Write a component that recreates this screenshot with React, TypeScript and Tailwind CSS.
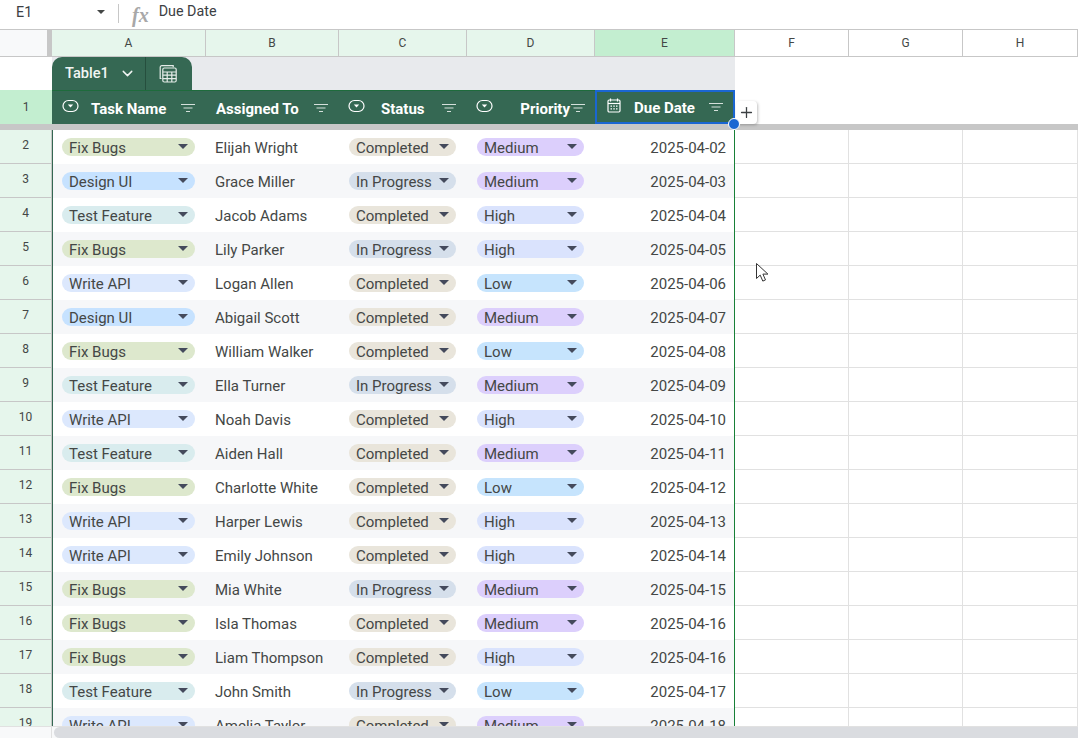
import { ChevronDown, Plus } from 'lucide-react'

const cols = 'grid grid-cols-[52px_154px_133px_128px_128px_140px_114px_114px_115px]'

const taskColors: Record<string, string> = {
  'Fix Bugs': 'bg-[#dde8cd]',
  'Design UI': 'bg-[#c6e2ff]',
  'Test Feature': 'bg-[#d9ecee]',
  'Write API': 'bg-[#dce8fd]',
}
const statusColors: Record<string, string> = {
  Completed: 'bg-[#e9e5db]',
  'In Progress': 'bg-[#d5dfeb]',
}
const priorityColors: Record<string, string> = {
  Medium: 'bg-[#dccffc]',
  High: 'bg-[#dae3fd]',
  Low: 'bg-[#c6e4fd]',
}

const rows = [
  ['Fix Bugs', 'Elijah Wright', 'Completed', 'Medium', '2025-04-02'],
  ['Design UI', 'Grace Miller', 'In Progress', 'Medium', '2025-04-03'],
  ['Test Feature', 'Jacob Adams', 'Completed', 'High', '2025-04-04'],
  ['Fix Bugs', 'Lily Parker', 'In Progress', 'High', '2025-04-05'],
  ['Write API', 'Logan Allen', 'Completed', 'Low', '2025-04-06'],
  ['Design UI', 'Abigail Scott', 'Completed', 'Medium', '2025-04-07'],
  ['Fix Bugs', 'William Walker', 'Completed', 'Low', '2025-04-08'],
  ['Test Feature', 'Ella Turner', 'In Progress', 'Medium', '2025-04-09'],
  ['Write API', 'Noah Davis', 'Completed', 'High', '2025-04-10'],
  ['Test Feature', 'Aiden Hall', 'Completed', 'Medium', '2025-04-11'],
  ['Fix Bugs', 'Charlotte White', 'Completed', 'Low', '2025-04-12'],
  ['Write API', 'Harper Lewis', 'Completed', 'High', '2025-04-13'],
  ['Write API', 'Emily Johnson', 'Completed', 'High', '2025-04-14'],
  ['Fix Bugs', 'Mia White', 'In Progress', 'Medium', '2025-04-15'],
  ['Fix Bugs', 'Isla Thomas', 'Completed', 'Medium', '2025-04-16'],
  ['Fix Bugs', 'Liam Thompson', 'Completed', 'High', '2025-04-16'],
  ['Test Feature', 'John Smith', 'In Progress', 'Low', '2025-04-17'],
  ['Write API', 'Amelia Taylor', 'Completed', 'Medium', '2025-04-18'],
]

function Chip({ label, color, width }: { label: string; color: string; width: string }) {
  return (
    <div className={`flex h-[18px] items-center justify-between rounded-full pl-[7px] pr-[7px] ${color} ${width}`}>
      <span className="pt-[2px]">{label}</span>
      <span className="mb-[2px] h-0 w-0 border-x-[5.5px] border-t-[5.5px] border-x-transparent border-t-[#444a5c]" />
    </div>
  )
}

function FilterIcon() {
  return (
    <svg width="14" height="10" viewBox="0 0 14 10" className="shrink-0">
      <path d="M0 1.5h14M2.5 5h9M5 8.5h4" stroke="#d5e0db" strokeWidth="1.2" fill="none" />
    </svg>
  )
}

function DropdownIcon() {
  return (
    <svg width="17" height="14" viewBox="0 0 17 14" className="mb-[3px] shrink-0">
      <rect x="1" y="1.5" width="15" height="11" rx="5.5" fill="none" stroke="#fff" strokeWidth="1.2" />
      <path d="M5.8 5.6h5.4L8.5 8.4z" fill="#fff" />
    </svg>
  )
}

function CalendarIcon() {
  return (
    <svg width="14" height="15" viewBox="0 0 14 15" className="mb-[3px] shrink-0">
      <path d="M3.5 0.5v3M10.5 0.5v3" stroke="#fff" strokeWidth="1.2" />
      <rect x="1" y="2" width="12" height="12" rx="1.2" fill="none" stroke="#fff" strokeWidth="1.2" />
      <path d="M1 5.5h12" stroke="#fff" strokeWidth="1.2" />
      <path d="M3.5 7.5h1.5v1.3H3.5zM6.3 7.5h1.5v1.3H6.3zM9 7.5h1.5v1.3H9zM3.5 10.2h1.5v1.3H3.5zM6.3 10.2h1.5v1.3H6.3zM9 10.2h1.5v1.3H9z" fill="#fff" />
    </svg>
  )
}

function TableIcon() {
  return (
    <svg width="20" height="20" viewBox="0 0 20 20" fill="none" stroke="#e4ece8" strokeWidth="1.2">
      <path d="M3.5 14.5H2.2V3.2A1.6 1.6 0 0 1 3.8 1.6h11.4v1.6" />
      <rect x="4.8" y="4" width="13.4" height="14" rx="1.5" />
      <path d="M4.8 8h13.4M4.8 11.2h13.4M4.8 14.6h13.4M9.2 8v10M13.8 8v10" />
    </svg>
  )
}

function ColHeader({ label, active }: { label: string; active?: boolean }) {
  return (
    <div className={`flex items-center justify-center border-r border-b border-[#c7c7c7] ${active ? 'bg-[#c3eed0]' : label > 'E' ? 'bg-white' : 'bg-[#e6f6ec]'}`}>
      {label}
    </div>
  )
}

export default function App() {
  return (
    <div className="relative h-[738px] w-[1078px] overflow-hidden bg-white font-['Roboto',sans-serif] text-[#444746]">
      {/* formula bar */}
      <div className="flex h-[30px] items-center border-b border-[#c7c7c7] text-[14.3px] text-[#3c4043]">
        <span className="ml-4 w-[81px] pb-[4px]">E1</span>
        <span className="mb-[5px] h-0 w-0 border-x-[4.5px] border-t-[4.5px] border-x-transparent border-t-[#444746]" />
        <span className="ml-[13px] mb-[3px] h-[19px] w-px bg-[#c7c7c7]" />
        <span className="ml-[13px] font-['Liberation_Serif',serif] text-[20px] font-bold italic text-[#a8a8a8]">fx</span>
        <span className="ml-[10px] pb-[6px]">Due Date</span>
      </div>

      {/* column letters */}
      <div className={`${cols} h-[27px] text-[12px] text-[#444746]`}>
        <div className="border-r-[5px] border-b border-[#c7c7c7] bg-[#f8f9fa]" />
        <ColHeader label="A" />
        <ColHeader label="B" />
        <ColHeader label="C" />
        <ColHeader label="D" />
        <ColHeader label="E" active />
        <ColHeader label="F" />
        <ColHeader label="G" />
        <ColHeader label="H" />
      </div>

      {/* table name tab row */}
      <div className="flex h-[33px]">
        <div className="w-[52px] bg-white" />
        <div className="flex w-[683px] bg-[#e8eaed]">
          <div className="flex h-full w-[140px] items-center rounded-t-[10px] bg-[#356853] text-[14.6px] font-medium text-[#f1f5f3]">
            <span className="ml-[13px]">Table1</span>
            <ChevronDown size={17} className="ml-[10px]" />
            <span className="ml-[9px] h-full w-px bg-[#264f3e]" />
            <span className="ml-[12px]"><TableIcon /></span>
          </div>
        </div>
        <div className="flex-1 bg-white" />
      </div>

      {/* header row */}
      <div className={`${cols} h-[34px] text-[15px] font-bold text-white`}>
        <div className="flex items-center justify-center bg-[#c3eed0] text-[12px] font-normal text-[#444746]">1</div>
        <div className="flex items-center border-t border-[#1e6b3c] bg-[#356853] pl-[10px] pr-[11px]">
          <DropdownIcon />
          <span className="ml-[12px] flex-1 pt-[3px]">Task Name</span>
          <FilterIcon />
        </div>
        <div className="flex items-center border-t border-[#1e6b3c] bg-[#356853] pl-[10px] pr-[11px]">
          <span className="flex-1 pt-[3px]">Assigned To</span>
          <FilterIcon />
        </div>
        <div className="flex items-center border-t border-[#1e6b3c] bg-[#356853] pl-[9px] pr-[11px]">
          <DropdownIcon />
          <span className="ml-[16px] flex-1 pt-[3px]">Status</span>
          <FilterIcon />
        </div>
        <div className="flex items-center border-t border-[#1e6b3c] bg-[#356853] pl-[9px] pr-[10px]">
          <DropdownIcon />
          <span className="mr-[1px] flex-1 pt-[3px] text-right">Priority</span>
          <FilterIcon />
        </div>
        <div className="flex items-center border-2 border-[#1a66d2] bg-[#356853] pl-[10px] pr-[10px]">
          <CalendarIcon />
          <span className="ml-[13px] flex-1 pt-[3px]">Due Date</span>
          <FilterIcon />
        </div>
        <div className="col-span-3 bg-white" />
      </div>

      {/* freeze bar */}
      <div className="h-[6px] bg-[#c7c7c7]" />

      {/* body rows */}
      <div className="h-[596px] overflow-hidden">
        {rows.map((r, i) => (
          <div key={i} className={`${cols} h-[34px] text-[15px]`}>
            <div className="flex items-center justify-center border-r border-b border-[#c7c7c7] bg-[#e6f6ec] pb-[3px] text-[12px]">{i + 2}</div>
            {/* table cells */}
            <div className={`flex items-center border-l border-[#356853] pl-[9px] ${i % 2 ? 'bg-[#f6f7f9]' : 'bg-white'}`}>
              <Chip label={r[0]} color={taskColors[r[0]]} width="w-[133px]" />
            </div>
            <div className={`flex items-center pl-[9px] pt-[2px] ${i % 2 ? 'bg-[#f6f7f9]' : 'bg-white'}`}>{r[1]}</div>
            <div className={`flex items-center pl-[10px] ${i % 2 ? 'bg-[#f6f7f9]' : 'bg-white'}`}>
              <Chip label={r[2]} color={statusColors[r[2]]} width="w-[107px]" />
            </div>
            <div className={`flex items-center pl-[10px] ${i % 2 ? 'bg-[#f6f7f9]' : 'bg-white'}`}>
              <Chip label={r[3]} color={priorityColors[r[3]]} width="w-[107px]" />
            </div>
            <div className={`flex items-center justify-end border-r border-[#188038] pr-[8px] pt-[2px] ${i % 2 ? 'bg-[#f6f7f9]' : 'bg-white'}`}>{r[4]}</div>
            <div className="border-r border-b border-[#e1e1e1]" />
            <div className="border-r border-b border-[#e1e1e1]" />
            <div className="border-r border-b border-[#e1e1e1]" />
          </div>
        ))}
      </div>

      {/* scrollbar */}
      <div className="flex h-[12px] border-t border-[#e1e1e1] bg-[#f8f9fa]">
        <div className="w-[52px] shrink-0 border-r border-[#e1e1e1]" />
        <div className="ml-[2px] h-full flex-1 rounded-l-full bg-[#dadce0]" />
      </div>

      {/* add column button */}
      <div className="absolute left-[736px] top-[101px] flex h-[23px] w-[21px] items-center justify-center rounded-[4px] bg-white shadow-[1px_1px_3px_rgba(0,0,0,0.25)]">
        <Plus size={17} strokeWidth={1.8} className="text-[#3c4043]" />
      </div>

      {/* selection handle */}
      <div className="absolute left-[728px] top-[118px] h-[12px] w-[12px] rounded-full border-[1.5px] border-white bg-[#1a66d2]" />

      {/* mouse cursor */}
      <svg className="absolute left-[755px] top-[262px]" width="16" height="22" viewBox="0 0 16 22">
        <path d="M1.5 1.5v15l3.7-3.4 2.6 6 2.7-1.2-2.6-5.8h5z" fill="#fff" stroke="#333" strokeWidth="1" />
      </svg>
    </div>
  )
}
